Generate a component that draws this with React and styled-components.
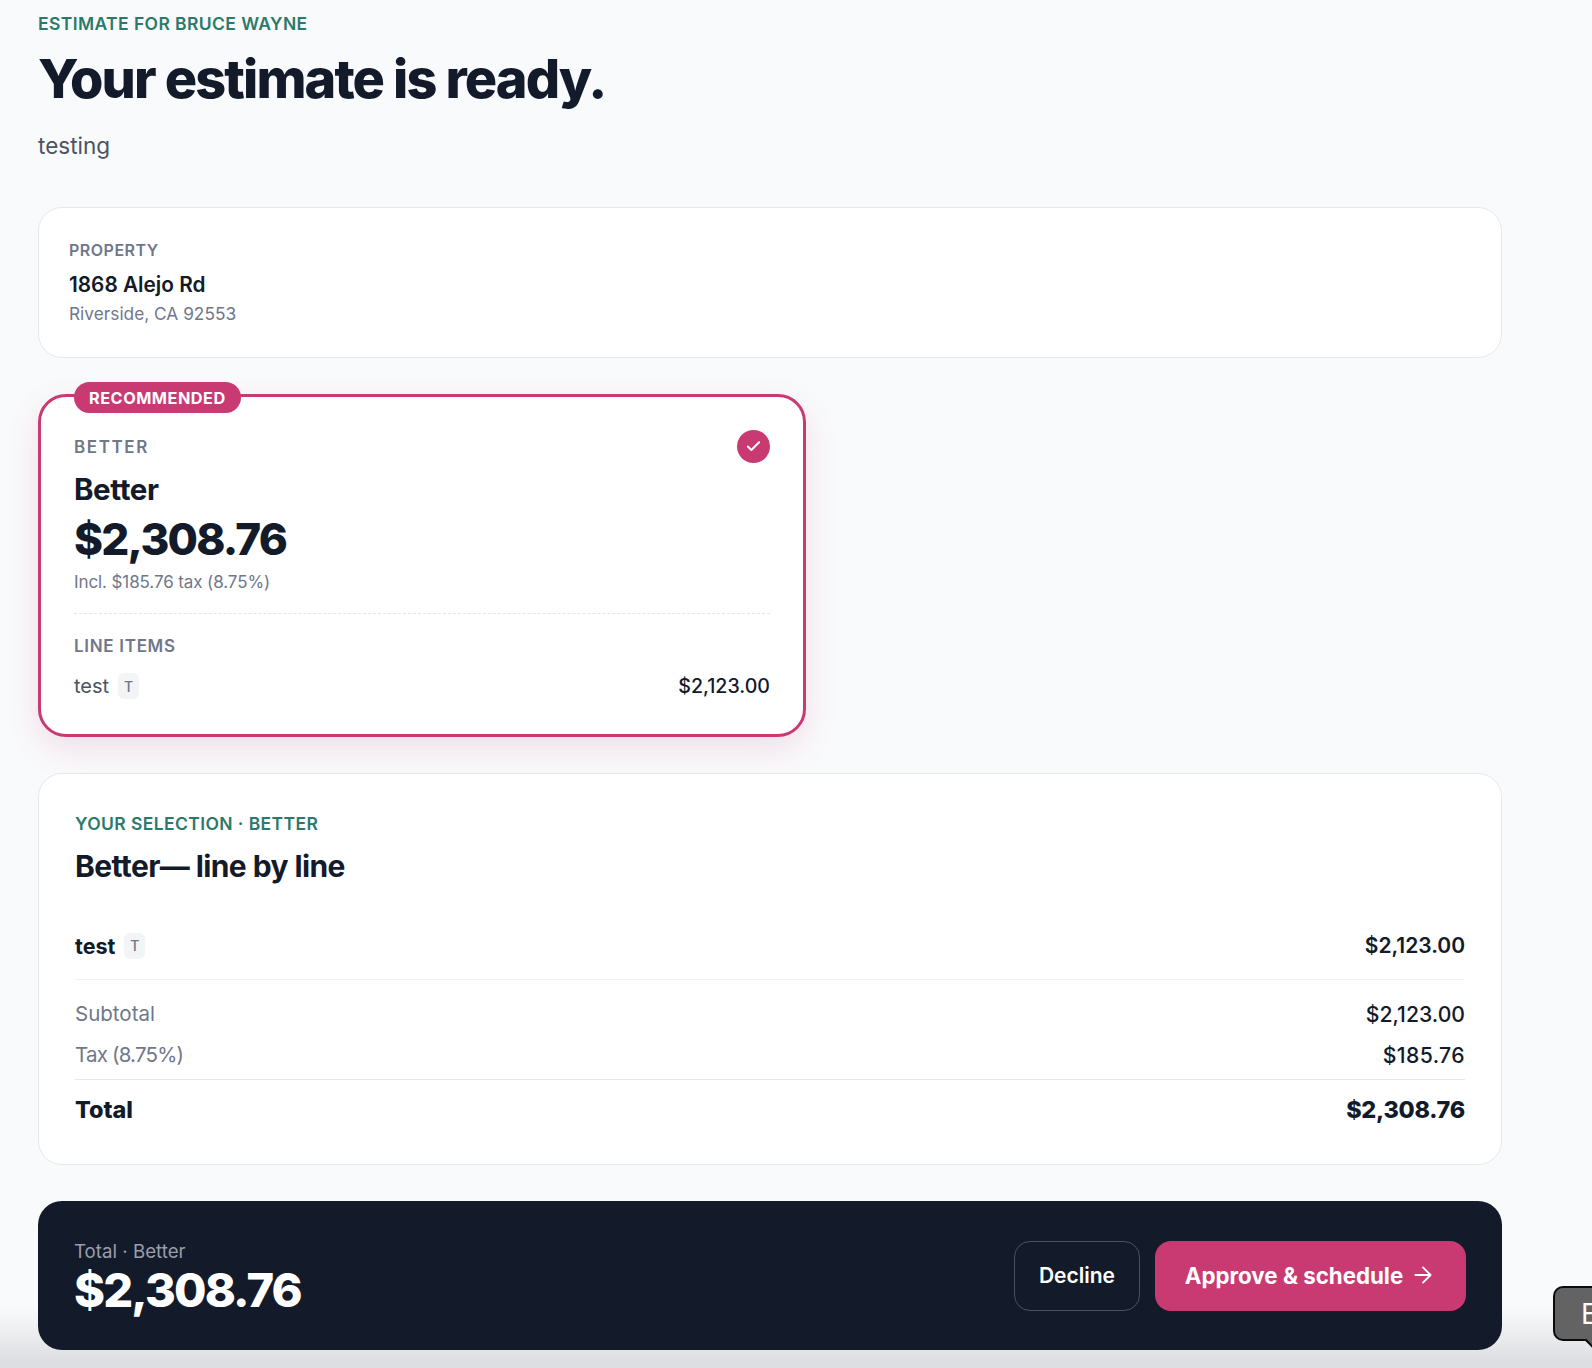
import React from "react";
import styled, { createGlobalStyle } from "styled-components";

const Global = createGlobalStyle`
  html, body { margin: 0; padding: 0; height: 1368px; overflow: hidden; background: #f9fafc; }
  body { font-family: Inter, "Liberation Sans", sans-serif; color: #131a2a; -webkit-font-smoothing: antialiased; }
  #root { height: 1368px; }
`;

const Page = styled.div`
  position: relative;
  height: 1368px;
  overflow: hidden;
  padding: 12px 90px 0 38px;
  box-sizing: border-box;
  display: flex;
  flex-direction: column;
`;
const Shade = styled.div`
  position: absolute;
  left: 0; right: 0; bottom: 0;
  height: 60px;
  background: linear-gradient(to bottom, rgba(220,222,225,0), #dcdee1 90%);
  pointer-events: none;
`;
const Eyebrow = styled.div`
  font-size: 17.5px;
  line-height: 24px;
  font-weight: 600;
  letter-spacing: 0.4px;
  color: #2a7a6b;
  text-transform: uppercase;
`;
const Title = styled.h1`
  margin: 11px 0 0;
  font-size: 54px;
  line-height: 64px;
  font-weight: 800;
  letter-spacing: -1.9px;
  color: #131a2a;
`;
const Lead = styled.p`
  margin: 19px 0 0;
  font-size: 22.5px;
  line-height: 32px;
  color: #4b5362;
`;
const Card = styled.section`
  box-sizing: border-box;
  background: #fff;
  border: 1px solid #e6e8ec;
  border-radius: 24px;
`;
const PropertyCard = styled(Card)`
  margin-top: 45px;
  height: 151px;
  padding: 30px 30px;
`;
const Label = styled.div`
  font-size: 16px;
  line-height: 24px;
  font-weight: 600;
  letter-spacing: 0.5px;
  color: #70778a;
  text-transform: uppercase;
`;
const TierLabel = styled(Label)`
  font-size: 17px;
  letter-spacing: 1.6px;
`;
const ItemsLabel = styled(Label)`
  font-size: 17px;
  letter-spacing: 0.7px;
`;
const Street = styled.div`
  margin-top: 11px;
  font-size: 20.8px;
  line-height: 24px;
  font-weight: 600;
`;
const City = styled.div`
  margin-top: 5px;
  font-size: 17.3px;
  line-height: 24px;
  color: #70778a;
`;
const Featured = styled.section`
  position: relative;
  box-sizing: border-box;
  margin-top: 36px;
  width: 768px;
  height: 343px;
  padding: 38px 33px 0;
  background: #fff;
  border: 3px solid #c93a73;
  border-radius: 28px;
  box-shadow: 0 12px 32px rgba(201, 58, 115, 0.14);
`;
const Badge = styled.div`
  position: absolute;
  left: 33px;
  top: -15px;
  height: 31px;
  padding: 0 15px;
  display: flex;
  align-items: center;
  border-radius: 16px;
  background: #c93a73;
  color: #fff;
  font-size: 16.3px;
  font-weight: 700;
  letter-spacing: 0.5px;
`;
const Check = styled.div`
  position: absolute;
  right: 33px;
  top: 33px;
  width: 33px;
  height: 33px;
  border-radius: 50%;
  background: #c93a73;
  display: flex;
  align-items: center;
  justify-content: center;
`;
const PlanName = styled.div`
  margin-top: 12px;
  font-size: 29.5px;
  line-height: 36px;
  font-weight: 700;
  letter-spacing: -0.4px;
`;
const PlanPrice = styled.div`
  margin-top: 4px;
  font-size: 44px;
  line-height: 56px;
  font-weight: 800;
  letter-spacing: -1.75px;
`;
const Incl = styled.div`
  margin-top: 3px;
  font-size: 17px;
  line-height: 24px;
  color: #70778a;
  letter-spacing: -0.1px;
`;
const Dashed = styled.div`
  margin: 19px 0 20px;
  border-top: 1px dashed #e3e5e9;
`;
const ItemRow = styled.div`
  margin-top: 15px;
  display: flex;
  justify-content: space-between;
  align-items: center;
  height: 26px;
`;
const ItemName = styled.span`
  display: flex;
  align-items: center;
  gap: 9px;
  font-size: 20px;
  color: #4b5362;
`;
const Chip = styled.span`
  width: 21px;
  height: 26px;
  border-radius: 6px;
  background: #f3f4f6;
  color: #70778a;
  font-size: 14px;
  font-weight: 500;
  display: flex;
  align-items: center;
  justify-content: center;
`;
const Amount = styled.span`
  font-weight: 500;
  font-size: 19.6px;
  color: #131a2a;
`;
const Selection = styled(Card)`
  margin-top: 36px;
  height: 392px;
  padding: 38px 36px 0;
`;
const SelectionTitle = styled.h2`
  margin: 10px 0 0;
  font-size: 30px;
  line-height: 40px;
  font-weight: 700;
  letter-spacing: -0.6px;
`;
const DetailRow = styled.div`
  margin-top: 47px;
  margin-bottom: 13px;
  height: 32px;
  padding-bottom: 14px;
  display: flex;
  justify-content: space-between;
  align-items: flex-start;
  border-bottom: 1px solid #eff0f3;
  font-weight: 700;
`;
const DetailName = styled.span`
  display: flex;
  align-items: center;
  gap: 9px;
  font-size: 21.5px;
  line-height: 26px;
`;
const DetailAmount = styled.span`
  font-size: 21px;
  font-weight: 600;
  line-height: 26px;
`;
const SumRow = styled.div`
  display: flex;
  justify-content: space-between;
  align-items: center;
  height: 41px;
  font-size: 20.5px;
  color: #70778a;
`;
const SumName = styled.span`
  letter-spacing: ${p => (p.$tight ? "-0.8px" : "0")};
`;
const SumValue = styled.span`
  color: #131a2a;
  font-size: 21.2px;
  font-weight: 500;
  letter-spacing: ${p => (p.$wide ? "0.4px" : "0")};
`;
const TotalRow = styled.div`
  margin-top: 4px;
  padding-top: 14px;
  border-top: 1px solid #e6e8ec;
  display: flex;
  justify-content: space-between;
  align-items: center;
  font-size: 23.4px;
  line-height: 32px;
  font-weight: 800;
`;
const TotalAmount = styled.span`
  letter-spacing: -0.25px;
`;
const Bar = styled.section`
  position: relative;
  z-index: 1;
  box-sizing: border-box;
  margin-top: 36px;
  height: 149px;
  padding: 39px 36px 0;
  border-radius: 24px;
  background: #131a2a;
  display: flex;
  justify-content: space-between;
  align-items: flex-start;
  color: #fff;
`;
const BarLabel = styled.div`
  font-size: 18.7px;
  line-height: 24px;
  color: #9a9fab;
`;
const BarPrice = styled.div`
  font-size: 47px;
  line-height: 52px;
  font-weight: 800;
  letter-spacing: -1.85px;
`;
const Actions = styled.div`
  display: flex;
  gap: 15px;
  margin-top: 1px;
`;
const Ghost = styled.button`
  box-sizing: border-box;
  width: 126px;
  height: 70px;
  padding: 0 0 2px;
  border-radius: 16px;
  border: 1px solid #4a505e;
  background: transparent;
  color: #fff;
  font: 600 21px Inter, sans-serif;
`;
const Primary = styled.button`
  box-sizing: border-box;
  width: 311px;
  height: 70px;
  padding: 0 0 2px;
  border-radius: 16px;
  border: 0;
  background: #c93a73;
  color: #fff;
  font: 700 22.3px Inter, sans-serif;
  display: flex;
  align-items: center;
  justify-content: center;
  gap: 7px;
`;
const Bubble = styled.div`
  position: absolute;
  z-index: 2;
  left: 1553px;
  top: 1286px;
  box-sizing: border-box;
  width: 80px;
  height: 55px;
  padding-left: 26px;
  display: flex;
  align-items: center;
  background: #636363;
  border: 2px solid #0b0b0b;
  border-radius: 10px;
  color: #fff;
  font-size: 28px;
  line-height: 1;
  &::after {
    content: "";
    position: absolute;
    left: 32px;
    bottom: -7px;
    width: 10px;
    height: 10px;
    background: #636363;
    border-right: 2px solid #0b0b0b;
    border-bottom: 2px solid #0b0b0b;
    transform: rotate(45deg);
  }
`;

export default function App() {
  return (
    <Page>
      <Global />
      <Eyebrow>Estimate for Bruce Wayne</Eyebrow>
      <Title>Your estimate is ready.</Title>
      <Lead>testing</Lead>
      <PropertyCard>
        <Label>Property</Label>
        <Street>1868 Alejo Rd</Street>
        <City>Riverside, CA 92553</City>
      </PropertyCard>
      <Featured>
        <Badge>RECOMMENDED</Badge>
        <Check>
          <svg width="17" height="17" viewBox="0 0 24 24" fill="none" stroke="#fff" strokeWidth="2.8" strokeLinecap="round" strokeLinejoin="round">
            <path d="M20 6 9 17l-5-5" />
          </svg>
        </Check>
        <TierLabel>Better</TierLabel>
        <PlanName>Better</PlanName>
        <PlanPrice>$2,308.76</PlanPrice>
        <Incl>Incl. $185.76 tax (8.75%)</Incl>
        <Dashed />
        <ItemsLabel>Line items</ItemsLabel>
        <ItemRow>
          <ItemName>test <Chip>T</Chip></ItemName>
          <Amount>$2,123.00</Amount>
        </ItemRow>
      </Featured>
      <Selection>
        <Eyebrow>Your selection · Better</Eyebrow>
        <SelectionTitle>Better— line by line</SelectionTitle>
        <DetailRow>
          <DetailName>test <Chip>T</Chip></DetailName>
          <DetailAmount>$2,123.00</DetailAmount>
        </DetailRow>
        <SumRow><SumName>Subtotal</SumName><SumValue>$2,123.00</SumValue></SumRow>
        <SumRow><SumName $tight>Tax (8.75%)</SumName><SumValue $wide>$185.76</SumValue></SumRow>
        <TotalRow><span>Total</span><TotalAmount>$2,308.76</TotalAmount></TotalRow>
      </Selection>
      <Bar>
        <div>
          <BarLabel>Total · Better</BarLabel>
          <BarPrice>$2,308.76</BarPrice>
        </div>
        <Actions>
          <Ghost>Decline</Ghost>
          <Primary>
            Approve &amp; schedule
            <svg width="26" height="26" viewBox="0 0 24 24" fill="none" stroke="#fff" strokeWidth="1.7" strokeLinecap="round" strokeLinejoin="round">
              <path d="M5 12h14M12 5l7 7-7 7" />
            </svg>
          </Primary>
        </Actions>
      </Bar>
      <Shade />
      <Bubble>E</Bubble>
    </Page>
  );
}
